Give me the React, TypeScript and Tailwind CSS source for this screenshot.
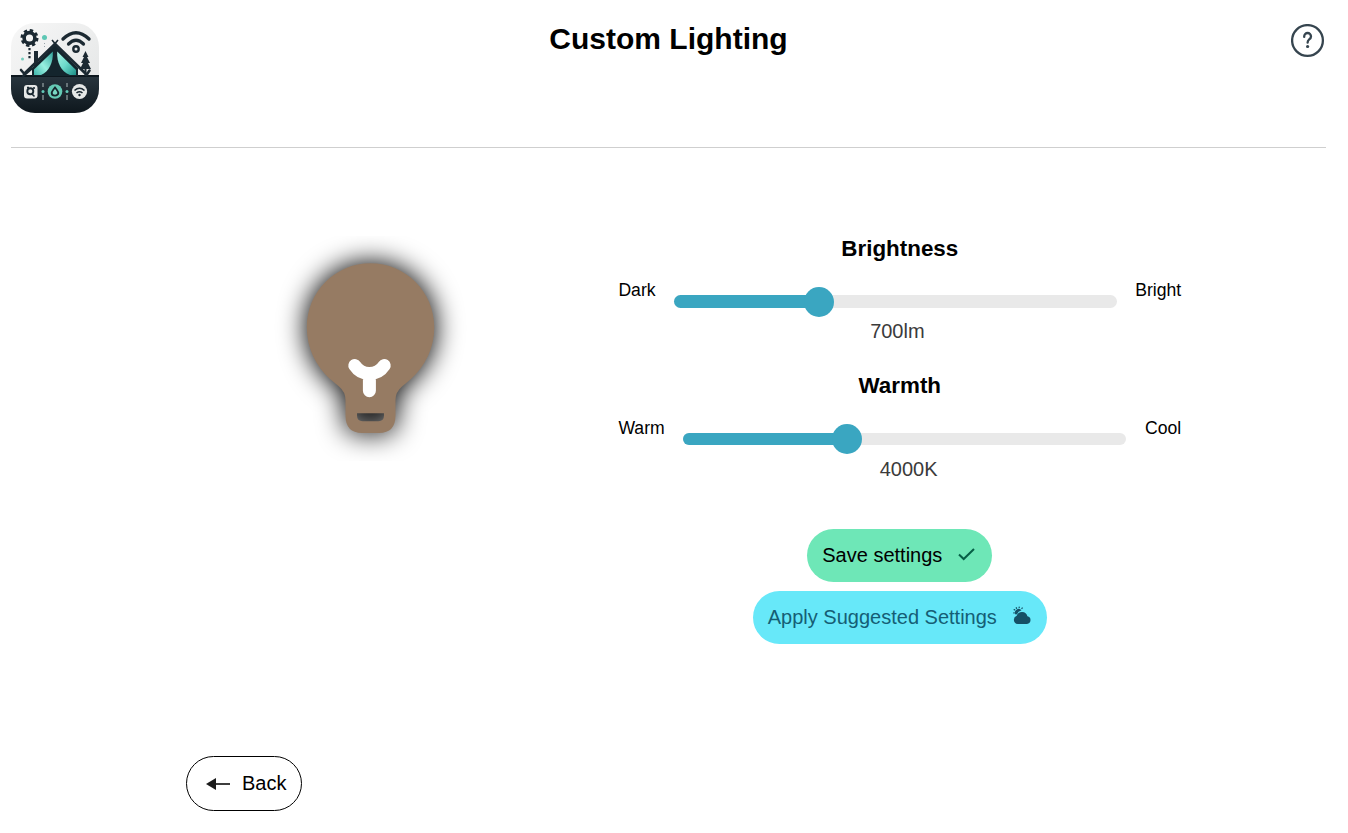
import type { ReactNode } from "react";

function AppLogo() {
  return (
    <svg className="block" width="88" height="90" viewBox="0 0 88 90" aria-hidden="true">
      <defs>
        <linearGradient id="sky" x1="0" y1="0" x2="1" y2="1">
          <stop offset="0" stopColor="#f7f7f7" />
          <stop offset="1" stopColor="#e2e4e4" />
        </linearGradient>
        <linearGradient id="ground" x1="0" y1="0" x2="0" y2="1">
          <stop offset="0" stopColor="#28353e" />
          <stop offset="1" stopColor="#0e171d" />
        </linearGradient>
        <linearGradient id="leftFlap" x1="0" y1="1" x2="1" y2="0">
          <stop offset="0" stopColor="#3fb5aa" />
          <stop offset="0.45" stopColor="#98efe0" />
          <stop offset="1" stopColor="#2fa39b" />
        </linearGradient>
        <linearGradient id="rightFlap" x1="0" y1="0" x2="1" y2="1">
          <stop offset="0" stopColor="#a8f2e4" />
          <stop offset="0.5" stopColor="#6ddacb" />
          <stop offset="1" stopColor="#1d8f88" />
        </linearGradient>
        <clipPath id="tile">
          <rect width="88" height="90" rx="24" />
        </clipPath>
      </defs>
      <g clipPath="url(#tile)">
        <rect width="88" height="90" fill="url(#sky)" />
        <rect y="53" width="88" height="37" fill="url(#ground)" />
        <path d="M0 53H88" stroke="#0d171e" strokeWidth="2" />
        <g fill="none" stroke="#1b2932">
          <circle cx="18.500" cy="15" r="5.400" strokeWidth="3.600" />
          <circle cx="18.500" cy="15" r="7.700" strokeWidth="2.600" strokeDasharray="3.400 2.650" />
          <path d="M18.500 25v12" strokeWidth="2.200" strokeDasharray="2.200 1.800" />
          <path d="M52 16Q65 3.500 78 16" strokeWidth="3.400" strokeLinecap="round" />
          <path d="M57.500 21Q65 13.500 72.500 21" strokeWidth="3.200" strokeLinecap="round" />
          <circle cx="65" cy="26" r="2.700" strokeWidth="2.400" />
          <path d="M41 17 46 23M47 17 42 23" strokeWidth="1.600" />
          <path d="M10 47 13 50.500M12 53 20 46M75.500 52 78.500 47.500" strokeWidth="2.600" strokeLinecap="round" />
          <path d="M74.500 35V53" strokeWidth="2" />
        </g>
        <path d="M23 28h4v17h-4z" fill="#1b2932" />
        <path d="M44 22 67 45V53H21V45Z" fill="#14252d" />
        <path d="M41.800 28.500C42.500 39 38 49 30 52H23V46.500Z" fill="url(#leftFlap)" />
        <path d="M46.200 28.500C45.500 39 50 49 59 52H65V47Z" fill="url(#rightFlap)" />
        <path d="M13 51 44 21 75 51" fill="none" stroke="#1b2932" strokeWidth="2.800" />
        <path d="M74.500 28 77.500 34H76L79 40H77L80 46H69L72 40H70L73 34H71.500Z" fill="#1b2932" />
        <circle cx="33.500" cy="14.500" r="2.500" fill="#5dc7b4" />
        <circle cx="11.500" cy="36" r="1.500" fill="#76cdbd" />
        <path d="M33.500 20v5" stroke="#9aa5ab" strokeWidth="1" strokeDasharray="1 2" />
        <rect x="13" y="62" width="13.500" height="13.500" rx="3" fill="#e6e8e7" />
        <circle cx="19.300" cy="68.300" r="3" fill="none" stroke="#1b2932" strokeWidth="1.900" />
        <path d="m21 71 2.500 2.500M16 64.500h2M23 64v2" stroke="#1b2932" strokeWidth="1.600" />
        <path d="M32 60v4m0 8v5M56 60v4m0 8v5" stroke="#aebabb" strokeWidth="1" />
        <circle cx="32" cy="68.500" r="1.500" fill="#62c9b8" />
        <circle cx="56" cy="68.500" r="1.500" fill="#62c9b8" />
        <circle cx="44" cy="68.500" r="7.300" fill="#65cab5" />
        <path
          d="M44 64.500Q40.700 68.500 40.700 70a3.300 2.600 0 0 0 6.600 0Q47.300 68.500 44 64.500Z"
          fill="#79d8c4"
          stroke="#17252c"
          strokeWidth="1.900"
        />
        <circle cx="68.500" cy="68.500" r="7.600" fill="#e6e8e7" />
        <path d="M63.500 67.500q5-4.500 10 0M65.500 70q3-2.500 6 0" fill="none" stroke="#1b2932" strokeWidth="1.600" />
        <circle cx="68.500" cy="72" r="1.200" fill="#1b2932" />
      </g>
    </svg>
  );
}

function HelpIcon() {
  return (
    <svg className="block" width="34" height="34" viewBox="0.500 0.500 34 34" fill="none" stroke="#36454f">
      <circle cx="17" cy="17" r="15.400" strokeWidth="2.300" />
      <path
        d="M13.700 13.400V12.900a3.400 3.400 0 0 1 6.800 0c0 1.500-.800 2.200-1.800 3-1.100.900-1.600 1.600-1.600 3.300"
        strokeWidth="2.300"
        strokeLinecap="round"
      />
      <circle cx="17.100" cy="23" r="1.600" fill="#36454f" stroke="none" />
    </svg>
  );
}

function Bulb() {
  return (
    <svg className="block overflow-hidden" width="224" height="225" viewBox="258 236 224 225">
      <defs>
        <filter
          id="glow"
          filterUnits="userSpaceOnUse"
          colorInterpolationFilters="sRGB"
          x="200"
          y="180"
          width="340"
          height="340"
        >
          <feMorphology in="SourceAlpha" operator="dilate" radius="1" />
          <feGaussianBlur stdDeviation="13.500" result="shade" />
          <feMerge>
            <feMergeNode in="shade" />
            <feMergeNode in="SourceGraphic" />
          </feMerge>
        </filter>
      </defs>
      <path
        filter="url(#glow)"
        fill="#967b63"
        fillRule="evenodd"
        d="M370.500 263.300C335.300 263.300 306.800 291.800 306.800 327.500C306.800 348 316 366.500 330 379L339 386.500Q345.500 392 345.500 400V415.500Q345.500 432.900 362 432.900H379Q395.500 432.900 395.500 415.500V400Q395.500 392 402 386.500L411 379C425 366.500 434.300 348 434.300 327.500C434.300 291.800 405.700 263.300 370.500 263.300ZM357 413.300H384V415.500Q384 421.200 378.500 421.200H362.500Q357 421.200 357 415.500Z"
      />
      <path
        d="M354.800 365.500Q360 373.500 369.300 373.500Q379 373.500 384.200 365.500M369.400 374V390.700"
        fill="none"
        stroke="#ffffff"
        strokeWidth="13"
        strokeLinecap="round"
      />
    </svg>
  );
}

function Arrow() {
  return (
    <svg width="26" height="14" viewBox="0 0 26 14">
      <path d="M1 7 11 1V13Z" fill="#1b1b1b" />
      <path d="M10 7H25" stroke="#1b1b1b" strokeWidth="1.700" />
    </svg>
  );
}

function CloudSun() {
  return (
    <svg width="18" height="19" viewBox="0 0 18 19" fill="#155066">
      <path d="M4.600 18A4.300 4.300 0 0 1 3.700 9.700A5.600 5.600 0 0 1 14.400 10.300A3.900 3.900 0 0 1 14 18Z" />
      <path d="M2.500 8.600A3.700 3.700 0 0 1 8.500 4.300Q5 5.200 4 8.300Z" />
      <path
        d="M.800 6.900h.400M1.200 3.600l.500.300M3.300 1.800l.300.500M6.200 1.100v.500M9.200 2l-.300.500"
        stroke="#155066"
        strokeWidth="1.300"
        strokeLinecap="round"
      />
    </svg>
  );
}

type LevelProps = {
  start: string;
  end: string;
  value: string;
  percent: number;
  trackClass: string;
  valueClass: string;
};

function Level({ start, end, value, percent, trackClass, valueClass }: LevelProps) {
  return (
    <div className="flex h-[66px] items-start justify-between text-[17.6px] leading-5">
      <span>{start}</span>
      <div className="w-[443px] pt-[15px]">
        <div className={"relative w-full rounded-full bg-[#e9e9e9] " + trackClass}>
          <div className="h-full rounded-full bg-[#3aa6c1]" style={{ width: `${percent}%` }} />
          <div
            className="absolute top-1/2 size-[30px] -translate-x-1/2 -translate-y-1/2 rounded-full bg-[#3aa6c1]"
            style={{ left: `${percent}%` }}
          />
        </div>
        <p className={"text-center text-xl leading-6 text-[#3b3b3b] " + valueClass}>{value}</p>
      </div>
      <span>{end}</span>
    </div>
  );
}

function PillButton({ className, children }: { className: string; children: ReactNode }) {
  return (
    <button className={"flex h-[53px] items-center rounded-full pb-0.5 text-xl " + className}>
      {children}
    </button>
  );
}

export default function App() {
  return (
    <main className="h-[833px] overflow-hidden bg-white font-['Liberation_Sans',Arial,sans-serif] text-black">
      <header className="ml-[11px] grid h-[148px] w-[1315px] grid-cols-[1fr_auto_1fr] items-start border-b border-[#cfcfcf] pt-[23px]">
        <AppLogo />
        <h1 className="text-[30px] leading-8 font-bold">Custom Lighting</h1>
        <button className="mt-px mr-px justify-self-end" aria-label="Help">
          <HelpIcon />
        </button>
      </header>

      <div className="flex h-[608px] pl-[258px]">
        <div className="pt-[88px]">
          <Bulb />
        </div>
        <section className="ml-[136.4px] w-[562.8px] pt-[87px]">
          <h2 className="text-center text-[22.4px] leading-7 font-bold">Brightness</h2>
          <div className="mt-[17px]">
            <Level
              start="Dark"
              end="Bright"
              value="700lm"
              percent={32.8}
              trackClass="h-[13px]"
              valueClass="mt-[11px] pl-1"
            />
          </div>
          <h2 className="mt-[26px] text-center text-[22.4px] leading-7 font-bold">Warmth</h2>
          <div className="mt-[18px]">
            <Level
              start="Warm"
              end="Cool"
              value="4000K"
              percent={37}
              trackClass="h-[12px]"
              valueClass="mt-3 pl-[7.500px]"
            />
          </div>
          <div className="mt-[45px] flex flex-col items-center gap-[9px]">
            <PillButton className="mr-px w-[185px] bg-[#6ee7b7] pl-[15.500px]">
              Save settings
              <svg className="ml-[16px]" width="17" height="13" viewBox="0 0 17 13">
                <path d="M1 6.500 5.700 11 16 1" fill="none" stroke="#065f46" strokeWidth="2" />
              </svg>
            </PillButton>
            <PillButton className="w-[294px] bg-[#67e8f9] pl-[15px] text-[#155e75]">
              Apply Suggested Settings
              <span className="mb-0.5 ml-[16px]">
                <CloudSun />
              </span>
            </PillButton>
          </div>
        </section>
      </div>

      <button className="ml-[186px] flex h-[55px] w-[116px] items-center rounded-full border border-black pl-[18px] text-xl">
        <Arrow />
        <span className="mb-0.5 ml-[11px]">Back</span>
      </button>
    </main>
  );
}
